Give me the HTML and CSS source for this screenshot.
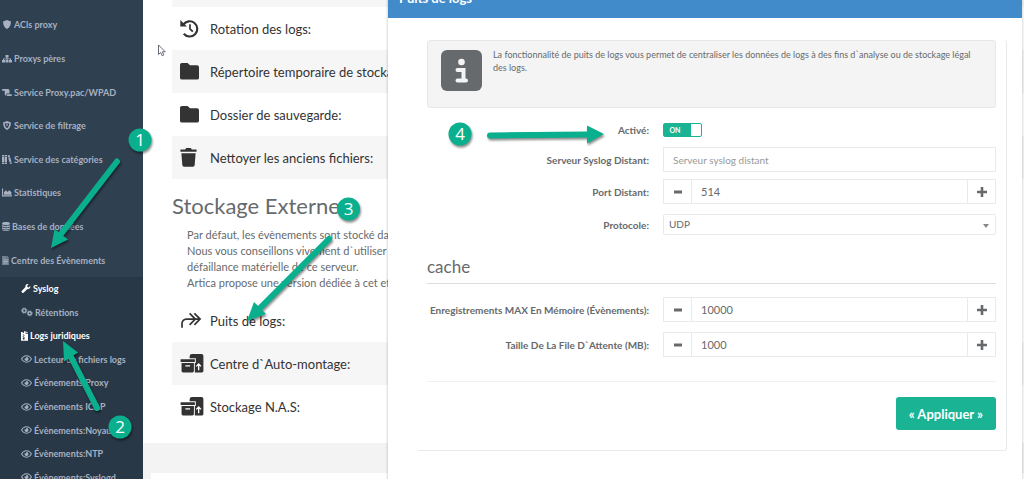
FILE: index.html
```html
<!DOCTYPE html>
<html lang="fr">
<head>
<meta charset="utf-8">
<title>Puits de logs</title>
<link rel="stylesheet" href="styles.css">
</head>
<body>
<svg class="defs" aria-hidden="true">
  <symbol id="eye" viewBox="0 0 24 16"><path fill-rule="evenodd" d="M12 0C6 0 2 4 0 8c2 4 6 8 12 8s10-4 12-8c-2-4-6-8-12-8zm0 2.200c4.500 0 7.500 2.600 9.300 5.800-1.800 3.200-4.800 5.800-9.300 5.800S4.500 11.200 2.700 8C4.500 4.800 7.500 2.200 12 2.200z"/><path d="M12 3.500a4.500 4.500 0 1 1-4.500 4.500c0-.7.200-1.300.4-1.900.5.400 1 .6 1.600.6A2.300 2.300 0 0 0 11.300 3.600z"/></symbol>
  <symbol id="folder" viewBox="0 0 20 18"><path d="M2 0h6l2.500 2.500H18a2 2 0 0 1 2 2V15.500a2 2 0 0 1-2 2H2a2 2 0 0 1-2-2V2a2 2 0 0 1 2-2z"/></symbol>
  <symbol id="boxes" viewBox="0 0 24 20"><path d="M12 0h10a2 2 0 0 1 2 2v16a1.500 1.500 0 0 1-1.500 1.500H15V9.500h1V4.500H9.500V2.500A2.500 2.500 0 0 1 12 0z"/><path d="M0 5.500h15v3H0zM1 9.500h13v8.500a1.500 1.500 0 0 1-1.500 1.500h-10A1.500 1.500 0 0 1 1 18z"/><path d="M5 12.500h5M19 17v-6M16.500 13l2.500-2.500 2.500 2.500" fill="none" stroke="#fff" stroke-width="1.400"/></symbol>
  <symbol id="minus" viewBox="0 0 10 10"><path d="M1 3.500h8v3H1z"/></symbol>
  <symbol id="plus" viewBox="0 0 10 10"><path d="M0 3.700h3.700V0h2.600v3.700H10v2.600H6.300V10H3.700V6.300H0z"/></symbol>
</svg>
<div class="layout">
  <nav class="sidebar">
    <ul class="menu">
      <li><a href="#"><svg class="ic" viewBox="0 0 16 16"><path d="M8 0l7 2.500c0 6-2 11-7 13.500C3 13.500 1 8.500 1 2.500z"/></svg>ACls proxy</a></li>
      <li><a href="#"><svg class="ic" viewBox="0 0 20 16"><path d="M7 1h6v5h-2v2h7v3h2v5h-6v-5h2V9.500h-5V11h2v5H7v-5h2V9.500H4V11h2v5H0v-5h2V8h7V6H7z"/></svg>Proxys pères</a></li>
      <li><a href="#"><svg class="ic" viewBox="0 0 20 16"><path d="M1 1h11a3 3 0 0 1 3 3v6H9v2.500a1.800 1.800 0 0 1-3.500 0V4.500H1A2 2 0 0 1 1 1zM10.500 11.500H20a3 3 0 0 1-3 3.500H9c1-.8 1.500-2 1.500-3.500z"/></svg>Service Proxy.pac/WPAD</a></li>
      <li><a href="#"><svg class="ic" viewBox="0 0 16 16"><path fill-rule="evenodd" d="M8 0l7 2.500c0 6-2 11-7 13.500C3 13.500 1 8.500 1 2.500zM4 4c0 4 1 6.500 4 9 3-2.500 4-5 4-9L8 4.500z"/><circle cx="8" cy="7" r="1.500"/></svg>Service de filtrage</a></li>
      <li><a href="#"><svg class="ic" viewBox="0 0 18 16"><path d="M0 0h4v2H0zM0 3h4v10H0zM0 14h4v2H0zM5 0h4v2H5zM5 3h4v10H5zM5 14h4v2H5zM10 1l3.500-1 1 3-3.500 1zM11.200 5l3.500-1 2.300 8-3.500 1zM13.800 14l3.500-1 .7 2-3.500 1z"/></svg>Service des catégories</a></li>
      <li><a href="#"><svg class="ic" viewBox="0 0 18 16"><path d="M0 1h2v12h16v2H0zM3.500 12V7.500L7 4l3 3 3-3 4 3.500V12z"/></svg>Statistiques</a></li>
      <li><a href="#"><svg class="ic ic-db" viewBox="0 0 14 16"><path d="M0 2.500C0-.8 14-.8 14 2.500v1C14 6 0 6 0 3.500zM0 5.500c2 2 12 2 14 0v2c0 2.500-14 2.500-14 0zM0 9.500c2 2 12 2 14 0v2c0 2.500-14 2.500-14 0zM0 13.200c2 2 12 2 14 0v.5c0 3-14 3-14 0z"/></svg>Bases de données</a></li>
      <li><a href="#"><svg class="ic ic-doc" viewBox="0 0 12 16"><path d="M0 0h8v4h4v12H0z" opacity=".6"/><path d="M9 0l3 3H9zM2 6h8v1.500H2zM2 9h8v1.500H2zM2 12h8v1.500H2z"/></svg>Centre des Évènements</a></li>
    </ul>
    <ul class="submenu">
      <li><a class="on" href="#"><svg class="ic" viewBox="0 0 16 16"><path d="M15.500 3.500L13 6l-2.500-.5L10 3l2.500-2.500C10-.5 6.500 1 7 5.500L.8 11.800a2.300 2.300 0 0 0 3.400 3.400L10.500 9c4 .8 6-2.500 5-5.500z"/></svg>Syslog</a></li>
      <li><a href="#"><svg class="ic ic-gears" viewBox="0 0 22 16"><g fill="none" stroke="currentColor"><circle cx="6" cy="5.500" r="3.200" stroke-width="2.500"/><circle cx="6" cy="5.500" r="5" stroke-width="1.600" stroke-dasharray="2 1.920"/><circle cx="16" cy="10.500" r="3" stroke-width="2.500"/><circle cx="16" cy="10.500" r="4.700" stroke-width="1.500" stroke-dasharray="2 1.690"/></g></svg>Rétentions</a></li>
      <li><a class="on" href="#"><svg class="ic ic-file" viewBox="0 0 12 16"><path fill-rule="evenodd" d="M0 1h3v2h2V0h3v4h4v12H0zM3 5v1.500h1.500V8H3v2h1.500v1.500H3V14h3v-4.500H4.500V8H6V6.500H4.500V5z"/><path d="M9 0l3 3H9z"/></svg>Logs juridiques</a></li>
      <li><a href="#"><svg class="ic ic-eye"><use href="#eye"/></svg>Lecteur de fichiers logs</a></li>
      <li><a href="#"><svg class="ic ic-eye"><use href="#eye"/></svg>Évènements:Proxy</a></li>
      <li><a href="#"><svg class="ic ic-eye"><use href="#eye"/></svg>Évènements ICAP</a></li>
      <li><a href="#"><svg class="ic ic-eye"><use href="#eye"/></svg>Évènements:Noyau</a></li>
      <li><a href="#"><svg class="ic ic-eye"><use href="#eye"/></svg>Évènements:NTP</a></li>
      <li><a href="#"><svg class="ic ic-eye"><use href="#eye"/></svg>Évènements:Syslogd</a></li>
    </ul>
  </nav>
  <main class="content">
    <section class="page">
      <ul class="rows rows-top">
        <li class="stub"></li>
        <li><svg class="big" viewBox="0 0 20 20"><path d="M3.500 6A8 8 0 1 1 4 15.500" fill="none" stroke="currentColor" stroke-width="2.300"/><path d="M.3 1v7h7z"/><path d="M10.500 5.500v5l3 2.800" fill="none" stroke="currentColor" stroke-width="1.800"/></svg>Rotation des logs:</li>
        <li><svg class="big"><use href="#folder"/></svg>Répertoire temporaire de stockage:</li>
        <li><svg class="big"><use href="#folder"/></svg>Dossier de sauvegarde:</li>
        <li><svg class="big bin" viewBox="0 0 17 20"><path d="M0 1.500h5L6 0h5l1 1.500h5V4H0zM1 5.500h15L15 18a1.800 1.800 0 0 1-1.800 1.700H3.800A1.800 1.800 0 0 1 2 18z"/></svg>Nettoyer les anciens fichiers:</li>
      </ul>
      <h2>Stockage Externe</h2>
      <p class="intro">Par défaut, les évènements sont stocké dans<br>Nous vous conseillons vivement d`utiliser<br>défaillance matérielle de ce serveur.<br>Artica propose une version dédiée à cet effet</p>
      <ul class="rows">
        <li><svg class="big wide" viewBox="0 0 24 20"><path d="M1.500 17.500V13a4.500 4.500 0 0 1 4.500-4.500h14M9.500 2.500l6 6-6 6M14.500 2.500l6 6-6 6" fill="none" stroke="currentColor" stroke-width="1.800"/></svg>Puits de logs:</li>
        <li class="odd"><svg class="big wide"><use href="#boxes"/></svg>Centre d`Auto-montage:</li>
        <li><svg class="big wide"><use href="#boxes"/></svg>Stockage N.A.S:</li>
      </ul>
    </section>
    <section class="next-panel"></section>
  </main>
</div>

<div class="modal" role="dialog" aria-labelledby="mtitle">
  <h1 class="modal-head" id="mtitle">Puits de logs</h1>
  <form class="card">
    <div class="info">
      <svg class="info-ic" viewBox="0 0 41 41"><rect width="41" height="41" rx="6" fill="#676a6c"/><circle cx="20.500" cy="12" r="3.300" fill="#f4f4f4"/><path d="M16.500 20h6v10.500M16.500 30.500h8.500" stroke="#f4f4f4" stroke-width="4" stroke-linecap="round" fill="none"/></svg>
      <p>La fonctionnalité de puits de logs vous permet de centraliser les données de logs à des fins d`analyse ou de stockage légal des logs.</p>
    </div>
    <div class="field f-switch"><label for="on">Activé:</label>
      <span class="switch"><input type="checkbox" id="on" checked><span class="switch-on">ON</span></span></div>
    <div class="field"><label for="srv">Serveur Syslog Distant:</label><input class="text" id="srv" type="text" placeholder="Serveur syslog distant"></div>
    <div class="field"><label for="port">Port Distant:</label>
      <div class="spin"><button type="button" aria-label="Moins"><svg><use href="#minus"/></svg></button><input class="text" id="port" type="text" value="514"><button type="button" aria-label="Plus"><svg><use href="#plus"/></svg></button></div></div>
    <div class="field f-select"><label for="proto">Protocole:</label>
      <span class="pick"><select id="proto"><option>UDP</option></select></span></div>
    <h3>cache</h3>
    <div class="field"><label for="max">Enregistrements MAX En Mémoire (Évènements):</label>
      <div class="spin"><button type="button" aria-label="Moins"><svg><use href="#minus"/></svg></button><input class="text" id="max" type="text" value="10000"><button type="button" aria-label="Plus"><svg><use href="#plus"/></svg></button></div></div>
    <div class="field f-last"><label for="queue">Taille De La File D`Attente (MB):</label>
      <div class="spin"><button type="button" aria-label="Moins"><svg><use href="#minus"/></svg></button><input class="text" id="queue" type="text" value="1000"><button type="button" aria-label="Plus"><svg><use href="#plus"/></svg></button></div></div>
    <div class="actions"><button type="button" class="apply">« Appliquer »</button></div>
  </form>
</div>

<svg class="marks" width="1024" height="479" viewBox="0 0 1024 479">
  <g class="arrow">
    <path class="shaft" d="M117 161.500L61 234"/><path class="tip" d="M51 248l17-8.500L54.500 229z"/>
    <path class="shaft" d="M97 408L71 357"/><path class="tip" d="M63 341l15 11.500L64 361.500z"/>
    <path class="shaft" d="M329 239L260 308"/><path class="tip" d="M247 321l7-19 12 12z"/>
    <path class="shaft" d="M490 135.500L588 134.500"/><path class="tip" d="M604 134l-17-8.500v18z"/>
  </g>
  <g class="disc"><circle cx="140" cy="140" r="11.500"/><circle cx="120" cy="427" r="11.500"/><circle cx="348.500" cy="209" r="11.500"/><circle cx="460" cy="134" r="11.500"/></g>
  <g class="num"><text x="140" y="146">1</text><text x="120" y="433">2</text><text x="348.500" y="215">3</text><text x="460" y="140">4</text></g>
  <path d="M158.500 45v9.500l2.200-2 1.500 3.300 1.600-.8-1.500-3.200h3z" fill="#fff" stroke="#555b66" stroke-width=".9"/>
</svg>
</body>
</html>
```

FILE: styles.css
```css
* { box-sizing: border-box; }
body { margin: 0; height: 100vh; overflow: hidden; position: relative; background: #f3f3f4; font-family: Lato, "Open Sans", sans-serif; font-size: 11px; color: #676a6c; }
ul { list-style: none; margin: 0; padding: 0; }
h1, h2, h3, p { margin: 0; }
button, input, select { font: inherit; color: inherit; }
svg { fill: currentColor; flex: none; }
.defs { position: absolute; width: 0; height: 0; }

.layout { display: flex; height: 100%; }
.sidebar { flex: none; width: 143px; background: #2f4050; overflow: hidden; white-space: nowrap; padding-top: 8px; }
.menu { display: grid; grid-auto-rows: 1fr; height: 269px; }
.submenu { display: grid; grid-auto-rows: 1fr; height: 212px; background: #293846; }
.sidebar li { display: flex; align-items: center; }
.sidebar a { display: flex; align-items: center; gap: 2px; padding-left: 2px; color: #a7b1c2; font-size: 9px; font-weight: 700; text-decoration: none; }
.submenu a { padding-left: 21px; }
.sidebar a.on { color: #fff; }
.ic { width: 10px; height: 9px; }
.ic-db { width: 8px; }
.ic-doc { width: 7px; }
.ic-gears { width: 12px; height: 10px; }
.ic-file { width: 7px; height: 10px; }
.ic-eye { width: 11px; height: 8px; }

.content { flex: 1; min-width: 0; overflow: hidden; white-space: nowrap; display: flex; flex-direction: column; }
.page { background: #fff; padding: 0 0 15px 29px; }
.rows li { display: flex; align-items: center; gap: 11px; height: 43px; padding-left: 8px; font-size: 13px; color: #333; }
.rows .stub { height: 7px; }
.rows-top li:nth-child(odd), .rows .odd { background: #f6f6f6; }
.big { width: 19px; height: 19px; }
.bin { width: 17px; margin-right: 2px; }
.wide { width: 24px; margin-right: -5px; }
.page h2 { font-size: 22px; font-weight: 400; line-height: 28px; padding: 13px 0 7px; }
.intro { font-size: 11px; line-height: 16px; padding: 0 0 8px 15px; }
.next-panel { flex: 1; margin: 30px 0 0 8px; background: #fff; }

.modal { position: absolute; top: 0; bottom: 0; left: 388px; right: 2px; background: #fff; box-shadow: 0 0 2px 1px rgba(0, 0, 0, .15); }
.modal-head { background: #428bca; color: #fff; font-size: 13px; line-height: 16px; height: 18px; padding-left: 11px; display: flex; align-items: flex-end; padding-bottom: 12px; }
.card { margin: 22px 15px 0 29px; padding: 0 10px 20px; border: solid #e7eaec; border-width: 0 1px 1px 0; border-radius: 3px; }
.info { display: flex; gap: 11px; height: 68px; padding: 9px 12px 9px 13px; margin-bottom: 14px; border: 1px solid #e7e7e7; border-radius: 3px; background: #f4f4f4; font-size: 9px; line-height: 13px; }
.info p { margin-top: -2px; }
.info-ic { width: 41px; height: 41px; }
.field { display: grid; grid-template-columns: minmax(0, 2fr) minmax(0, 3fr); column-gap: 14px; align-items: center; margin-bottom: 7px; }
.field label { text-align: right; font-size: 10px; font-weight: 700; white-space: nowrap; line-height: 16px; }
.f-switch { margin-bottom: 9px; }
.text { width: 100%; min-width: 0; height: 25px; padding: 0 9px; border: 1px solid #e9eaec; background: #fff; font-size: 11px; }
.text::placeholder { color: #999; font-size: 10px; }
.spin { display: flex; }
.spin .text { flex: 1; margin: 0 -1px; }
.spin button { flex: none; width: 29px; height: 25px; border: 1px solid #e9eaec; background: #fff; padding: 0; display: flex; align-items: center; justify-content: center; }
.spin svg { width: 10px; height: 10px; }
.switch { position: relative; display: flex; width: 39px; height: 14px; border: 1px solid #1ab394; border-radius: 2px; background: linear-gradient(90deg, #1ab394 27px, #fff 27px); }
.switch input { position: absolute; inset: 0; width: 100%; height: 100%; margin: 0; opacity: 0; }
.switch-on { width: 22px; text-align: center; color: #fff; font-size: 7px; font-weight: 700; line-height: 12px; }
.f-select { padding-top: 3px; margin-bottom: 20px; }
.pick { position: relative; }
.pick select { display: block; width: 100%; height: 21px; appearance: none; padding: 0 5px 2px; border: 1px solid #e9eaec; border-radius: 2px; background: #fff; font-size: 10px; }
.pick::after { content: ""; position: absolute; right: 7px; top: 10px; border: solid transparent; border-width: 4px 3px 0; border-top-color: #888; }
h3 { font-size: 17px; font-weight: 400; line-height: 20px; padding: 2px 0 6px; border-bottom: 1px solid #ddd; margin-bottom: 13px; }
h3 + .field { margin-bottom: 10px; }
.f-last { margin-bottom: 24px; }
.actions { display: flex; justify-content: flex-end; padding-top: 15px; border-top: 1px solid #f0f0f0; }
.apply { height: 33px; padding: 0 13px; border: 0; border-radius: 3px; background: #1ab394; color: #fff; font-size: 13px; font-weight: 700; }

.marks { position: absolute; top: 0; left: 0; pointer-events: none; }
.arrow, .disc { fill: #0aaf8e; filter: drop-shadow(1px 2px 1px rgba(0, 0, 0, .45)); }
.shaft { stroke: #0aaf8e; stroke-width: 6; stroke-linecap: round; }
.num { fill: #fff; font: 17px "Open Sans", sans-serif; text-anchor: middle; }
```
